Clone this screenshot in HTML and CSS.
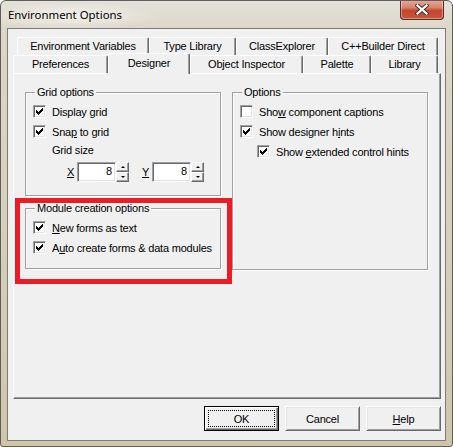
FILE: index.html
```html
<!DOCTYPE html>
<html lang="en">
<head>
    <meta charset="UTF-8">
    <title>Environment Options</title>
    <link rel="stylesheet" href="styles.css">
</head>
<body>
    <div class="window">
        <div class="titlebar">
            <span class="title">Environment Options</span>
            <div class="close">
                <svg width="14" height="11" viewBox="0 0 14 11">
                    <path d="M2.5 1.5 L11.5 9.5 M11.5 1.5 L2.5 9.5" stroke="#3a3a3a" stroke-width="4.2" stroke-linecap="square"/>
                    <path d="M2.5 1.5 L11.5 9.5 M11.5 1.5 L2.5 9.5" stroke="#fff" stroke-width="2.2" stroke-linecap="square"/>
                </svg>
            </div>
        </div>

        <div class="client">
            <div class="tab-row row-back">
                <div class="tab w-env">Environment Variables</div>
                <div class="tab w-type">Type Library</div>
                <div class="tab w-class">ClassExplorer</div>
                <div class="tab w-cpp">C++Builder Direct</div>
            </div>
            <div class="tab-row">
                <div class="tab w-pref">Preferences</div>
                <div class="tab w-des active">Designer</div>
                <div class="tab w-obj">Object Inspector</div>
                <div class="tab w-pal">Palette</div>
                <div class="tab w-lib">Library</div>
            </div>

            <div class="page">
                <div class="col">
                    <div class="group grid-group">
                        <span class="group-title">Grid options</span>
                        <div class="check">
                            <span class="box"><svg width="7" height="7" viewBox="0 0 7 7"><path d="M0 2H1V3H2V4H3V3H4V2H5V1H6V0H7V3H6V4H5V5H4V6H3V7H2V6H1V5H0Z"/></svg></span>
                            Display grid
                        </div>
                        <div class="check">
                            <span class="box"><svg width="7" height="7" viewBox="0 0 7 7"><path d="M0 2H1V3H2V4H3V3H4V2H5V1H6V0H7V3H6V4H5V5H4V6H3V7H2V6H1V5H0Z"/></svg></span>
                            <span>Sna<u>p</u> to grid</span>
                        </div>
                        <div class="field-label">Grid size</div>
                        <div class="spin-row">
                            <span class="spin-label"><u>X</u></span>
                            <span class="edit">8</span>
                            <span class="spin"><span class="spin-btn"><i class="arrow up"></i></span><span class="spin-btn"><i class="arrow down"></i></span></span>
                            <span class="spin-label second"><u>Y</u></span>
                            <span class="edit">8</span>
                            <span class="spin"><span class="spin-btn"><i class="arrow up"></i></span><span class="spin-btn"><i class="arrow down"></i></span></span>
                        </div>
                    </div>

                    <div class="group module-group">
                        <span class="group-title">Module creation options</span>
                        <div class="check">
                            <span class="box"><svg width="7" height="7" viewBox="0 0 7 7"><path d="M0 2H1V3H2V4H3V3H4V2H5V1H6V0H7V3H6V4H5V5H4V6H3V7H2V6H1V5H0Z"/></svg></span>
                            <span><u>N</u>ew forms as text</span>
                        </div>
                        <div class="check">
                            <span class="box"><svg width="7" height="7" viewBox="0 0 7 7"><path d="M0 2H1V3H2V4H3V3H4V2H5V1H6V0H7V3H6V4H5V5H4V6H3V7H2V6H1V5H0Z"/></svg></span>
                            <span>A<u>u</u>to create forms &amp; data modules</span>
                        </div>
                    </div>
                </div>

                <div class="group options-group">
                    <span class="group-title">Options</span>
                    <div class="check">
                        <span class="box"></span>
                        <span>Sho<u>w</u> component captions</span>
                    </div>
                    <div class="check">
                        <span class="box"><svg width="7" height="7" viewBox="0 0 7 7"><path d="M0 2H1V3H2V4H3V3H4V2H5V1H6V0H7V3H6V4H5V5H4V6H3V7H2V6H1V5H0Z"/></svg></span>
                        <span>Show designer h<u>i</u>nts</span>
                    </div>
                    <div class="check sub">
                        <span class="box"><svg width="7" height="7" viewBox="0 0 7 7"><path d="M0 2H1V3H2V4H3V3H4V2H5V1H6V0H7V3H6V4H5V5H4V6H3V7H2V6H1V5H0Z"/></svg></span>
                        <span>Show <u>e</u>xtended control hints</span>
                    </div>
                </div>

                <div class="highlight"></div>
            </div>

            <div class="buttons">
                <div class="btn default"><span class="focus">OK</span></div>
                <div class="btn"><span class="focus">Cancel</span></div>
                <div class="btn"><span class="focus"><u>H</u>elp</span></div>
            </div>
        </div>
    </div>
</body>
</html>
```

FILE: styles.css
```css
* {
    box-sizing: border-box;
}
body {
    margin: 0;
    background: #fff;
    font-family: "Liberation Sans", Arial, sans-serif;
    font-size: 11px;
    letter-spacing: -0.2px;
    color: #000;
}
u {
    text-underline-offset: 1px;
}

/* window frame */
.window {
    width: 453px;
    height: 447px;
    border: 1px solid #5e5e5e;
    border-radius: 6px 6px 3px 3px;
    background:
        radial-gradient(ellipse 90px 14px at 70px 15px, rgba(255, 255, 255, 0.6), rgba(255, 255, 255, 0) 100%),
        linear-gradient(180deg, #e3e1d9 0, #dcd7c8 28px, #cfc6aa 100%);
    display: flex;
    flex-direction: column;
    overflow: hidden;
}
.titlebar {
    height: 27px;
    display: flex;
    align-items: flex-start;
    padding-left: 7px;
}
.title {
    font-family: "Noto Sans", "Open Sans", sans-serif;
    font-size: 11.4px;
    letter-spacing: 0;
    line-height: 16px;
    margin-top: 6px;
}
.close {
    margin-left: auto;
    margin-right: 8px;
    margin-top: -1px;
    width: 44px;
    height: 20px;
    border: 1px solid #5a2d26;
    border-top: 0;
    border-radius: 0 0 4px 4px;
    background: linear-gradient(180deg, #e7ab9c 0, #d8816c 40%, #c4472e 55%, #c9553a 100%);
    box-shadow: inset 0 0 0 1px rgba(255, 255, 255, 0.35);
    display: flex;
    align-items: center;
    justify-content: center;
}

.client {
    margin: 0 6px;
    height: 413px;
    border: 1px solid #7c7c7c;
    background: #f0f0f0;
    padding: 8px 4px 0 5px;
}

/* tabs */
.tab-row {
    display: flex;
    height: 18px;
    align-items: flex-end;
}
.row-back {
    margin-left: 4px;
}
.tab {
    flex: none;
    height: 18px;
    text-align: center;
    line-height: 16px;
    border: 1px solid;
    border-color: #fff #696969 transparent #fff;
    border-bottom: 0;
    border-radius: 2px 2px 0 0;
    box-shadow: inset -1px 0 #a0a0a0;
    background: #f0f0f0;
    white-space: nowrap;
}
.tab.active {
    height: 21px;
    line-height: 18px;
    margin-bottom: -1px;
    position: relative;
    z-index: 1;
}
.w-env { width: 132px; }
.w-type { width: 87px; }
.w-class { width: 92px; }
.w-cpp { width: 110px; }
.w-pref { width: 95px; }
.w-des { width: 82px; }
.w-obj { width: 113px; }
.w-pal { width: 68px; }
.w-lib { width: 67px; }

.page {
    height: 326px;
    border: 1px solid;
    border-color: #fff #696969 #696969 #fff;
    box-shadow: inset -1px -1px #a0a0a0;
    padding: 18px 0 0 11px;
    display: flex;
    align-items: flex-start;
    gap: 11px;
    position: relative;
}
.col {
    display: flex;
    flex-direction: column;
    width: 196px;
}

/* group boxes */
.group {
    width: 196px;
    border: 1px solid #a0a0a0;
    box-shadow: 1px 1px #fff, inset 1px 1px #fff;
    display: flex;
    flex-direction: column;
    padding-left: 7px;
}
.grid-group { height: 104px; }
.module-group { height: 61px; margin-top: 12px; }
.options-group { height: 178px; }
.group-title {
    align-self: flex-start;
    margin: -7px 0 0 2px;
    padding: 0 2px;
    background: #f0f0f0;
    line-height: 13px;
}

.check {
    display: flex;
    align-items: center;
    height: 13px;
    margin-top: 7px;
    white-space: nowrap;
}
.group-title + .check {
    margin-top: 6px;
}
.check.sub {
    padding-left: 17px;
}
.box {
    flex: none;
    width: 13px;
    height: 13px;
    margin-right: 6px;
    background: #fff;
    border: 1px solid;
    border-color: #a0a0a0 #fff #fff #a0a0a0;
    box-shadow: inset 1px 1px #696969, inset -1px -1px #e3e3e3;
    display: flex;
    align-items: center;
    justify-content: center;
}
.box svg {
    display: block;
    fill: #000;
    shape-rendering: crispEdges;
}
.field-label {
    margin-top: 6px;
    padding-left: 19px;
    line-height: 13px;
}

/* spin edits */
.spin-row {
    display: flex;
    align-items: center;
    margin-top: 5px;
    padding-left: 34px;
}
.spin-label {
    width: 10px;
}
.spin-label.second {
    margin-left: 13px;
}
.edit {
    width: 39px;
    height: 20px;
    background: #fff;
    border: 1px solid;
    border-color: #a0a0a0 #fff #fff #a0a0a0;
    box-shadow: inset 1px 1px #696969, inset -1px -1px #e3e3e3;
    text-align: right;
    padding-right: 3px;
    line-height: 17px;
}
.spin {
    display: flex;
    flex-direction: column;
    width: 13px;
    height: 20px;
}
.spin-btn {
    height: 10px;
    border: 1px solid;
    border-color: #fff #696969 #696969 #fff;
    box-shadow: inset -1px -1px #a0a0a0;
    background: #f0f0f0;
    display: flex;
    align-items: center;
    justify-content: center;
}
.arrow {
    width: 0;
    height: 0;
    border-left: 2px solid transparent;
    border-right: 2px solid transparent;
}
.arrow.up { border-bottom: 2px solid #000; }
.arrow.down { border-top: 2px solid #000; }

/* red annotation */
.highlight {
    position: absolute;
    left: 1px;
    top: 124px;
    width: 217px;
    height: 86px;
    border: 5px solid #ed1c24;
}

/* dialog buttons */
.buttons {
    display: flex;
    justify-content: flex-end;
    gap: 6px;
    margin-top: 7px;
}
.btn {
    width: 75px;
    height: 25px;
    border: 1px solid;
    border-color: #fff #696969 #696969 #fff;
    box-shadow: inset 1px 1px #e3e3e3, inset -1px -1px #a0a0a0;
    background: #f0f0f0;
    display: flex;
    padding: 3px;
}
.btn.default {
    border-color: #000;
    box-shadow: inset 1px 1px #fff, inset -1px -1px #696969, inset -2px -2px #a0a0a0;
}
.focus {
    flex: 1;
    border: 1px dotted transparent;
    display: flex;
    align-items: center;
    justify-content: center;
}
.default .focus {
    border-color: #000;
}
```
